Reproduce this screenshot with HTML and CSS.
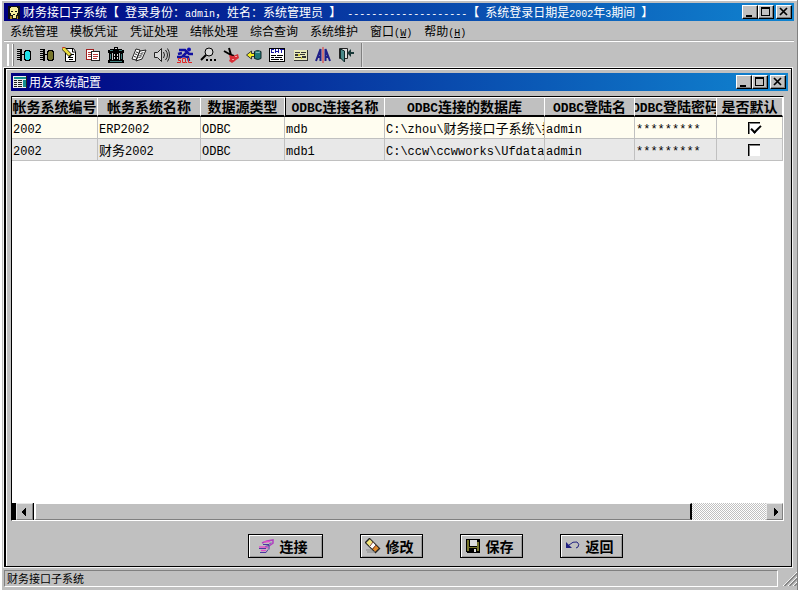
FILE: index.html
```html
<!DOCTYPE html>
<html lang="zh-CN">
<head>
<meta charset="utf-8">
<title>财务接口子系统</title>
<link rel="stylesheet" href="styles.css">
</head>
<body>
<div class="app">
  <header class="titlebar">
    <svg class="app-icon" viewBox="0 0 12 16" shape-rendering="crispEdges"><path fill="#111" d="M0 2h12v13H0z"/><path fill="#f4ec9a" d="M3 3h6v1h1v5H9v2H8v3H5v-3H3V9H2V4h1z"/><path fill="#111" d="M3 7h2v1H3zM7 7h2v1H7zM5 10h2v1H5z"/><path fill="#a98222" d="M2 12h2v3H2zM9 12h1v3H9z"/></svg>
    <h1 class="title">财务接口子系统【<span class="lat"> </span>登录身份<span class="colon">：</span><span class="lat">admin</span>，姓名<span class="colon">：</span>系统管理员<span class="lat"> </span>】<span class="lat"> --------------------</span>【<span class="lat"> </span>系统登录日期是<span class="lat">2002</span>年<span class="lat">3</span>期间<span class="lat"> </span>】</h1>
    <div class="winbtns">
      <button class="wb" aria-label="最小化"><svg viewBox="0 0 12 10" shape-rendering="crispEdges"><path d="M2 8h6v2H2z"/></svg></button>
      <button class="wb" aria-label="最大化"><svg viewBox="0 0 12 10" shape-rendering="crispEdges"><path fill-rule="evenodd" d="M1 0h9v9H1zM2 2v6h7V2z"/></svg></button>
      <button class="wb close" aria-label="关闭"><svg viewBox="0 0 12 10"><path d="M2 1l7 7M9 1L2 8" stroke="#000" stroke-width="1.7"/></svg></button>
    </div>
  </header>
  <nav class="menu">
    <button>系统管理</button><button>模板凭证</button><button>凭证处理</button><button>结帐处理</button><button>综合查询</button><button>系统维护</button><button>窗口<span class="lat">(<u>W</u>)</span></button><button>帮助<span class="lat">(<u>H</u>)</span></button>
  </nav>
  <div class="toolbar">
    <span class="grip"></span>
    <button aria-label="连接"><svg viewBox="0 0 16 16" shape-rendering="crispEdges"><path d="M1 2h4v1H1zM1 4h4v1H1zM1 6h4v1H1zM1 8h4v1H1zM1 10h4v1H1zM1 12h4v1H1zM4 2h2v12H4zM6 7h3v1H6z"/><path d="M9 3h5v1h1v9h-1v1H9v-1H8V4h1z"/><path fill="#20e0e8" d="M10 4h3v1h1v7h-1v1h-3v-1H9V5h1z"/></svg></button>
    <button aria-label="断开"><svg viewBox="0 0 16 16" shape-rendering="crispEdges"><path d="M1 2h4v1H1zM1 4h4v1H1zM1 6h4v1H1zM1 8h4v1H1zM1 10h4v1H1zM1 12h4v1H1zM4 2h2v12H4zM6 7h3v1H6z"/><path d="M9 3h5v1h1v9h-1v1H9v-1H8V4h1z"/><path fill="#77752b" d="M10 4h3v1h1v7h-1v1h-3v-1H9V5h1z"/></svg></button>
    <button aria-label="填制"><svg viewBox="0 0 16 16"><path fill="#fff" stroke="#000" d="M3.500 1.500h8l2 3v10h-10z"/><path stroke="#000" fill="none" d="M10.500 2v3H13M8 7.500h4M6 10.500h5M7 12.500h4"/><path stroke="#000" stroke-width="4" d="M1 1l8 8"/><path stroke="#e8da3c" stroke-width="3" d="M1 1l7 7"/><path stroke="#d02818" d="M0 1l3-1"/></svg></button>
    <button aria-label="复制"><svg viewBox="0 0 16 16" shape-rendering="crispEdges"><path d="M1 2h8v11H1z" fill="#a02020"/><path d="M2 3h6v9H2z" fill="#fff"/><path d="M6 4h9v10H6z" fill="#222"/><path d="M7 5h7v8H7z" fill="#fff"/><path fill="#b73838" d="M3 5h3v1H3zM3 7h3v1H3zM3 9h3v1H3zM8 7h5v1H8zM8 9h5v1H8zM8 11h4v1H8z"/></svg></button>
    <button aria-label="银行"><svg viewBox="0 0 16 16" shape-rendering="crispEdges"><path d="M6 0h4v2h4v1h2v3H0V3h2V2h4zM1 6h3v7H1zM12 6h3v7h-3zM0 13h16v3H0zM5 6h6v7H5z"/><path fill="#408080" d="M2 3h3v1H2zM11 3h3v1h-3zM2 7h1v5H2zM13 7h1v5h-1zM2 14h12v1H2z"/><path fill="#d8d8d8" d="M7 1h2v1H7zM6 7h1v2H6zM9 7h1v2H9zM6 10h1v2H6zM9 10h1v2H9z"/></svg></button>
    <button aria-label="账簿"><svg viewBox="0 0 16 16"><path fill="#fff" stroke="#222" d="M5 2l4 1-4 10-4-1zM9 4l6-1-4 9-6 2z"/><path stroke="#333" d="M5 5l2 .5M4 7l2 .5M3 9.500l2 .5M9.500 6.500l3-.8M8.500 8.500l3-.8M7.500 10.500l3-.8"/></svg></button>
    <button aria-label="声音"><svg viewBox="0 0 16 16"><path fill="#d8d8d8" stroke="#222" d="M.5 5.500h3l4-4v13l-4-4h-3z"/><path fill="none" stroke="#222" d="M9.500 5q2 3 0 6M11.500 3q4 5 0 10M13.500 1.500q4 6.500 0 13"/></svg></button>
    <button aria-label="执行 SQL"><svg viewBox="0 0 16 16"><circle cx="12" cy="2.500" r="2" fill="#1010b0"/><path fill="none" stroke="#1010a0" stroke-width="2.500" d="M2 3h6l2 2-4 4 5 1 1 4M10 5l2 2h4M6 9l-2 1H0M5 6L1 7"/><path fill="none" stroke="#e02828" d="M4 11.500H1.500v2h2v2H0M5.500 11.500h3v4h-3zM8 14l2 2M11.500 11v4.500H15"/></svg></button>
    <button aria-label="查找"><svg viewBox="0 0 16 16"><circle cx="9" cy="5" r="4" fill="#d8d8d8" stroke="#000"/><path stroke="#000" stroke-width="2" d="M6 8l-5 5"/><path d="M6 12h2v2H6zM10 12h2v2h-2zM14 12h2v2h-2z"/></svg></button>
    <button aria-label="剪切"><svg viewBox="0 0 16 16"><path fill="none" stroke="#000" stroke-width="2" d="M1 4l7 4M6 1l2 7 3 1"/><path fill="#d83038" d="M6 8l4 1 5-2 1 4-3 2-1 1-3 2-3-2 1-2z"/><path fill="#f4a0a0" d="M12 9h2v1h-2zM9 12h2v1H9z"/></svg></button>
    <button aria-label="导出"><svg viewBox="0 0 16 16"><path fill="#f5ef22" stroke="#333" d="M.5 8l5-4v2.500h3v3h-3V12z"/><path fill="#207878" stroke="#102828" d="M8.500 4.500q3-2 6.500 0v7q-3 2-6.500 0z"/><path fill="none" stroke="#a0cccc" d="M9.500 5q2 1 4.500 0"/></svg></button>
    <button aria-label="支票"><svg viewBox="0 0 16 16" shape-rendering="crispEdges"><path d="M0 1h16v14H0z"/><path fill="#fff" d="M1 2h14v12H1z"/><path fill="none" stroke="#1818a0" d="M5 2.500H2.500v3H5M6.500 2v4M9.500 2v4M6 4.500h4M11 2.500h4M12.500 2v4"/><path d="M2 8h5v1H2zM8 8h6v1H8zM2 10h3v1H2zM6 10h7v1H6zM2 12h8v1H2zM11 12h3v1h-3z"/></svg></button>
    <button aria-label="列表"><svg viewBox="0 0 16 16" shape-rendering="crispEdges"><path fill="#333" d="M2 3h14v11H2z"/><path fill="#e8e8ba" d="M2 3h13v10H2z"/><path fill="#333" d="M3 5h5v1H3zM9 5h5v1H9zM3 7h3v2H3zM8 7h5v1H8zM3 10h6v1H3zM10 9h4v2h-4z"/><path fill="#d6cd36" d="M6 7h2v2H6zM9 10h1v2H9z"/></svg></button>
    <button aria-label="对比"><svg viewBox="0 0 16 16"><path fill="none" stroke="#202088" stroke-width="2" d="M1 14L5.500 2v12M2 10h4M15 14L10.500 2v12M10 10h4"/><path fill="#e03030" d="M7.500 0h1v16h-1z"/></svg></button>
    <button aria-label="退出"><svg viewBox="0 0 16 16"><path fill="#ddd" stroke="#222" d="M1.500 1.500h8v10h-8z"/><path fill="#488888" stroke="#102828" d="M2.500 2l4 2v11l-4-4z"/><path d="M16 5h-3V2L9 6l4 4V7h3z" fill="#183838"/></svg></button>
    <span class="tool-end"></span>
  </div>
  <main class="child">
    <header class="titlebar">
      <svg class="child-icon" viewBox="0 0 14 12" shape-rendering="crispEdges"><path d="M0 0h14v12H0z" fill="#eee"/><path fill="#148f8f" d="M1 1h12v2H1zM10 4h3v7h-3z"/><path fill="#222" d="M1 4h3v1H1zM5 4h4v1H5zM1 6h3v1H1zM5 6h4v1H5zM1 8h3v1H1zM5 8h4v1H5zM1 10h3v1H1zM5 10h4v1H5zM13 0h1v12h-1z"/></svg>
      <h2 class="title">用友系统配置</h2>
      <div class="winbtns">
        <button class="wb" aria-label="最小化"><svg viewBox="0 0 12 10" shape-rendering="crispEdges"><path d="M2 8h6v2H2z"/></svg></button>
        <button class="wb" aria-label="最大化"><svg viewBox="0 0 12 10" shape-rendering="crispEdges"><path fill-rule="evenodd" d="M1 0h9v9H1zM2 2v6h7V2z"/></svg></button>
        <button class="wb close" aria-label="关闭"><svg viewBox="0 0 12 10"><path d="M2 1l7 7M9 1L2 8" stroke="#000" stroke-width="1.7"/></svg></button>
      </div>
    </header>
    <section class="grid">
      <div class="rows">
        <table>
          <colgroup><col class="c-id"><col class="c-name"><col class="c-type"><col class="c-conn"><col><col class="c-user"><col class="c-pass"><col class="c-def"></colgroup>
          <thead><tr><th>帐务系统编号</th><th>帐务系统名称</th><th>数据源类型</th><th class="marked"><span class="lat">ODBC</span>连接名称</th><th><span class="lat">ODBC</span>连接的数据库</th><th><span class="lat">ODBC</span>登陆名</th><th class="clipped"><div><span><span class="lat">ODBC</span>登陆密码</span></div></th><th>是否默认</th></tr></thead>
          <tbody>
            <tr><td><span class="lat">2002</span></td><td><span class="lat">ERP2002</span></td><td><span class="lat">ODBC</span></td><td><span class="lat">mdb</span></td><td><span class="lat">C:\zhou\</span>财务接口子系统<span class="lat">\</span>接</td><td><span class="lat">admin</span></td><td><span class="lat">*********</span></td><td class="tick"><input type="checkbox" aria-label="2002 ERP2002 默认" checked></td></tr>
            <tr><td><span class="lat">2002</span></td><td>财务<span class="lat">2002</span></td><td><span class="lat">ODBC</span></td><td><span class="lat">mdb1</span></td><td><span class="lat">C:\ccw\ccwworks\Ufdata.</span></td><td><span class="lat">admin</span></td><td><span class="lat">*********</span></td><td class="tick"><input type="checkbox" aria-label="2002 财务2002 默认"></td></tr>
          </tbody>
        </table>
      </div>
      <div class="scroll">
        <span class="split"></span>
        <button class="sb" aria-label="向左"><svg viewBox="0 0 8 8" shape-rendering="crispEdges"><path d="M5 0v8H4V7H3V6H2V5H1V3h1V2h1V1h1V0z"/></svg></button>
        <span class="thumb"></span>
        <span class="track"></span>
        <button class="sb" aria-label="向右"><svg viewBox="0 0 8 8" shape-rendering="crispEdges"><path d="M3 0v8h1V7h1V6h1V5h1V3H6V2H5V1H4V0z"/></svg></button>
      </div>
    </section>
    <footer class="actions">
      <button class="act wide"><svg viewBox="0 0 16 16"><path fill="none" stroke="#b040c0" stroke-width="1.500" d="M4 5l5-2 6-1v3l-4 3"/><path fill="none" stroke="#4838a0" d="M5 6.500h6l2-2M7 8.500l4-1v4M1 10.500h7M2 14.500h6l2-3"/><path fill="none" stroke="#e050c8" stroke-width="1.500" d="M6 4l6-.5M1 9h6l3 1M3 12.500h5"/></svg>连接</button>
      <button class="act"><svg viewBox="0 0 16 16"><path stroke="#222" stroke-width="7" d="M2 2l11 11"/><path stroke="#f4e77b" stroke-width="5" d="M3 3l4 4"/><path stroke="#fff" stroke-width="5" d="M6 6l3 3"/><path stroke="#e08a2a" stroke-width="5" d="M9 9l3 3"/><path stroke="#843" d="M8 11l3-4M5 8l3-4"/><path stroke="#888" d="M1 12h6M2 14h8"/></svg>修改</button>
      <button class="act"><svg viewBox="0 0 16 16" shape-rendering="crispEdges"><path d="M1 1h14v14H2v-1H1z"/><path fill="#77752b" d="M2 2h2v11H2zM12 4h2v9h-2zM4 9h8v1H4z"/><path fill="#ddd" d="M5 2h7v6H5zM9 11h2v3H9z"/></svg>保存</button>
      <button class="act"><svg viewBox="0 0 16 16"><path fill="#202080" d="M1 4v6h6z"/><path fill="none" stroke="#202080" d="M4 7q4-4 8-3 3 2 1 5l-2 1"/></svg>返回</button>
    </footer>
  </main>
  <footer class="status">
    <span class="panel">财务接口子系统</span>
    <svg class="sizer" viewBox="0 0 16 16"><path stroke="#fff" d="M2 16L16 2M7 16l9-9M12 16l4-4"/><path stroke="#808080" stroke-width="1.500" d="M3.500 16L16 3.500M8.500 16L16 8.500M13.500 16l2.500-2.500"/></svg>
  </footer>
</div>
</body>
</html>
```
FILE: styles.css
```css
* { box-sizing: border-box; }
body {
  margin: 0;
  background: #c0c0c0;
  color: #000;
  font: 12px/16px "Noto Sans CJK SC", sans-serif;
}
button {
  margin: 0;
  padding: 0;
  border: 0;
  background: none;
  color: inherit;
  font: inherit;
}
svg { display: block; flex: none; }
.lat {
  font-family: "Liberation Mono", monospace;
  font-size: 10px;
  line-height: 1;
  white-space: pre;
}
.colon { font-family: "Noto Sans CJK TC", sans-serif; line-height: 1; }
.app {
  display: flex;
  flex-direction: column;
  height: 100vh;
  padding: 3px 3px 3px 4px;
  border-right: 1px solid #808080;
  box-shadow: inset 2px 1px #fff;
}

/* Title bars */
.titlebar {
  display: flex;
  flex: none;
  align-items: center;
  height: 18px;
  padding: 0 2px 0 4px;
  background: linear-gradient(90deg, #000080, #1084d0);
  color: #fff;
}
.title {
  flex: 1;
  min-width: 0;
  margin: 0;
  overflow: hidden;
  font-size: 12px;
  font-weight: normal;
  line-height: 18px;
  white-space: nowrap;
}
.app-icon { width: 12px; height: 16px; margin-right: 3px; }
.child .titlebar { padding-left: 2px; }
.child-icon { width: 14px; height: 12px; margin-right: 2px; }
.winbtns { display: flex; }
.wb {
  display: grid;
  place-items: center;
  width: 16px;
  height: 14px;
  border: 1px solid;
  border-color: #fff #000 #000 #fff;
  background: #c0c0c0;
  box-shadow: inset -1px -1px #808080;
}
.wb svg { width: 12px; height: 10px; }
.close { margin-left: 2px; }

/* Menu and toolbar */
.menu {
  display: flex;
  flex: none;
  gap: 12px;
  height: 21px;
  padding-left: 6px;
  border-bottom: 1px solid #fff;
  box-shadow: inset 0 -1px #a8a8a8;
}
.toolbar {
  display: flex;
  flex: none;
  align-items: center;
  gap: 7px;
  height: 26px;
  padding-left: 3px;
}
.toolbar button svg { width: 16px; height: 16px; }
.grip {
  width: 6px;
  height: 22px;
  border: solid #fff;
  border-width: 0 1px 0 2px;
  box-shadow: 1px 0 #808080;
  margin-right: -4px;
}
.tool-end { height: 24px; border-left: 1px solid #808080; border-right: 1px solid #d8d8d8; }

/* Child window */
.child {
  display: flex;
  flex: 1;
  flex-direction: column;
  min-height: 0;
  margin-right: 2px;
  padding: 4px 3px 0 5px;
  border: 1px solid #000;
  border-left-width: 2px;
  outline: 1px solid #f4f4f4;
  box-shadow: inset 1px 1px #fff;
}
.grid {
  display: flex;
  flex: 1;
  flex-direction: column;
  min-height: 0;
  margin: 5px 4px 0 0;
  border: 1px solid #fff;
  border-top-color: #000;
  border-left-color: #000;
  background: #fff;
}
.rows { flex: 1; min-height: 0; overflow: hidden; }
table { width: 100%; border-collapse: separate; border-spacing: 0; table-layout: fixed; }
.c-id { width: 86px; }
.c-name { width: 103px; }
.c-type { width: 84px; }
.c-conn { width: 100px; }
.c-user { width: 90px; }
.c-pass { width: 82px; }
.c-def { width: 66px; }
th, td { padding: 0; overflow: hidden; white-space: nowrap; }
th {
  height: 20px;
  border-top: 1px solid #fff;
  border-right: 1px solid #fff;
  border-bottom: 2px solid #000;
  background: #c0c0c0;
  font-size: 14px;
  font-weight: bold;
  line-height: 17px;
}
th .lat { font-size: 13px; }
.marked { border-left: 1px solid #000; }
.clipped div { display: flex; justify-content: center; }
td {
  height: 22px;
  padding-left: 1px;
  border-right: 1px solid #c0c0c0;
  border-bottom: 1px solid #c0c0c0;
  background: #fffdf0;
  font-size: 13px;
  line-height: 20px;
}
td .lat { font-size: 12px; }
tbody tr:nth-child(2) td { background: #e8e8e8; }
.tick { padding-left: 8px; text-align: center; }
input[type="checkbox"] {
  appearance: none;
  display: block;
  width: 12px;
  height: 12px;
  margin: 0 auto;
  border: solid #000;
  border-width: 1px 0 0 1px;
  background: #fff;
  box-shadow: inset 1px 1px #808080;
}
input[type="checkbox"]:checked::before {
  content: "";
  display: block;
  width: 8px;
  height: 4px;
  margin: 2px 0 0 2px;
  border: solid #000;
  border-width: 0 0 2px 2px;
  transform: rotate(-45deg);
}

/* Horizontal scroll bar */
.scroll { display: flex; flex: none; height: 17px; background: #c0c0c0; }
.split { width: 4px; background: #000; }
.sb {
  display: grid;
  place-items: center;
  width: 17px;
  border: 1px solid;
  border-color: #e8e8e8 #808080 #808080 #e8e8e8;
  background: #c0c0c0;
}
.sb svg { width: 8px; height: 8px; }
.thumb {
  flex: 659;
  border: solid;
  border-width: 1px 2px 1px 2px;
  border-color: #fff #000 #808080 #fff;
  box-shadow: -1px 0 #000;
  margin-left: 1px;
}
.track {
  flex: 75;
  background: repeating-conic-gradient(#c0c0c0 0 25%, #fff 0 50%) 0 0 / 2px 2px;
}

/* Command buttons */
.actions {
  display: flex;
  flex: none;
  justify-content: center;
  gap: 37px;
  height: 45px;
  padding: 13px 0 0 71px;
}
.act {
  display: flex;
  align-items: center;
  justify-content: flex-start;
  gap: 5px;
  width: 63px;
  height: 24px;
  padding-left: 4px;
  border: 1px solid #000;
  box-shadow: inset 1px 1px #fff, inset -1px -1px #999;
  font-size: 14px;
  font-weight: bold;
  line-height: 20px;
}
.act svg { width: 16px; height: 16px; }
.wide { width: 75px; gap: 6px; padding-left: 9px; }

/* Status bar */
.status {
  display: flex;
  flex: none;
  gap: 3px;
  height: 20px;
  margin-right: -3px;
  padding-top: 3px;
}
.panel {
  flex: 1;
  padding-left: 2px;
  border: 1px solid;
  border-color: #808080 #fff #fff #808080;
  font-size: 11px;
  line-height: 14px;
}
.sizer { width: 16px; height: 16px; }
```
